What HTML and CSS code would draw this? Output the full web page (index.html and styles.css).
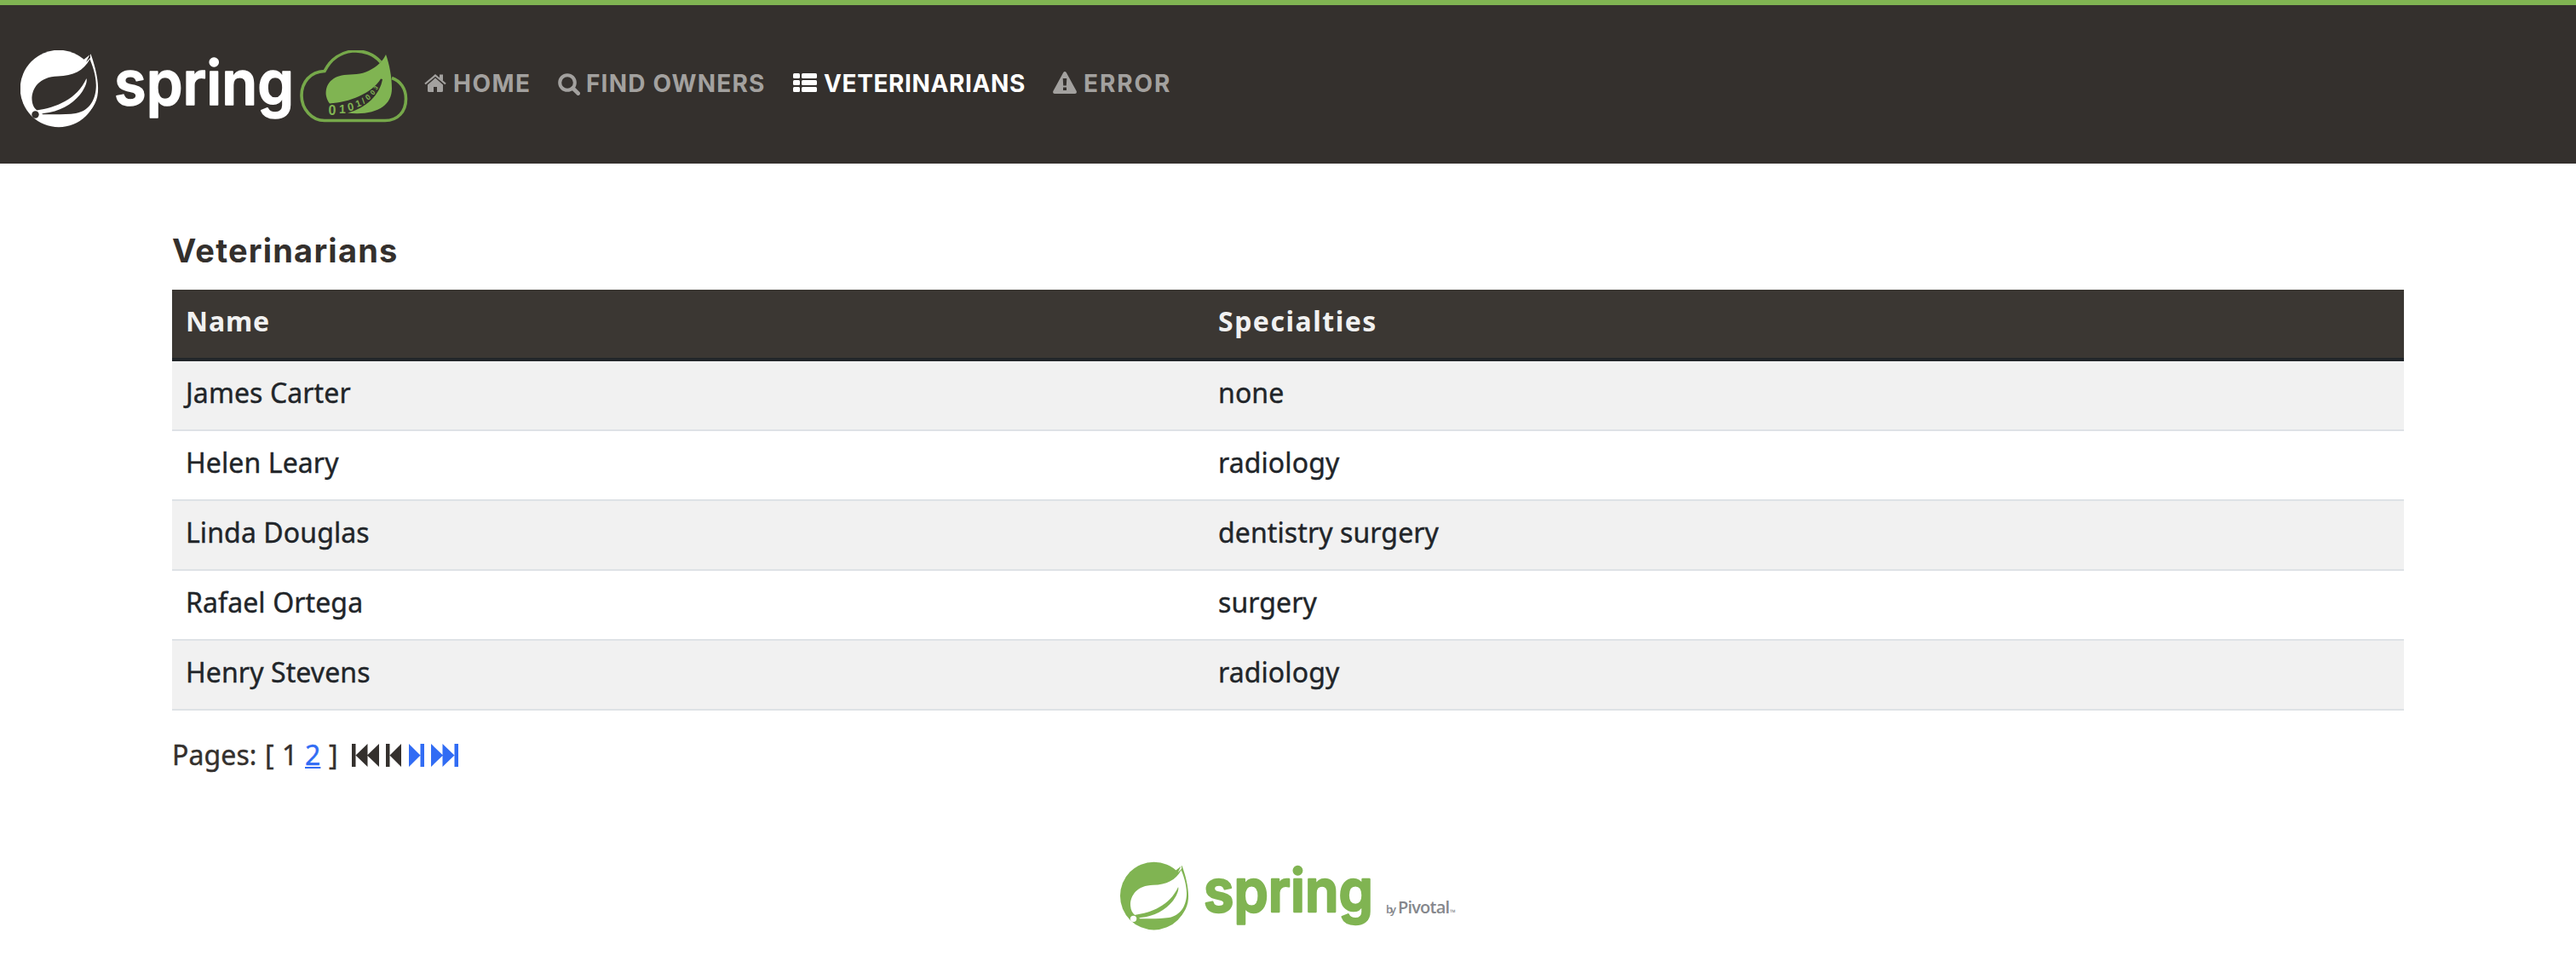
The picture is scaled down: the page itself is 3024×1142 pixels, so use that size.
FILE: index.html
```html
<!DOCTYPE html>
<html lang="en">
<head>
<meta charset="utf-8">
<title>PetClinic :: Veterinarians</title>
<link rel="stylesheet" href="styles.css">
</head>
<body>
<header class="navbar">
  <a class="brand" aria-label="Spring">
    <svg width="498" height="186" viewBox="0 6 498 186">
      <defs><clipPath id="logo-clip"><rect x="24" y="59" width="456" height="92"/></clipPath></defs>
      <g clip-path="url(#logo-clip)">
        <circle cx="69" cy="104" r="45.3" fill="#fff"/>
        <path fill="#fff" d="M106.5 63.5C112 78 116 96 115 108C114 122 106 132 96 138L60 100Z"/>
        <path fill="#34302d" d="M105.5 69.500C98 83 86 89 68 89.500C46 90 37 104 37.500 117C38 123 40 127 44 130L50 134.300C62 134.300 78 134.800 89 133C106 130 113 115 112.800 100C112.500 88 109 78 105.500 69.500ZM101 73L106 63L106 68Z"/>
        <path fill="#fff" d="M43 129.500C66 126 90 117 101.500 92C103 97 98 106 94 111C84 123 70 131 51 133L46 135Z"/>
        <circle cx="41.500" cy="134.500" r="4.200" fill="#34302d"/>
        <path class="cloud" d="M447 73C431 54 396 54 381 83.500C364 84 354 97 354 112C354 128 366 141.500 381 141.500H452C467 141.500 476.500 131 476.500 116C476.500 104 470 95 460 91.500"/>
        <path fill="#80b452" d="M453 64C450 71 443 78 433 83C424 88 413 87 404 88C388 90 381 101 383 113C384 117 385 119 387 121.500C410 120 436 110 447 92.500L449 93C446 111 430 127 408 132.500C440 136 460 125 460 104C460 90 457 75 453 64Z"/>
        <g class="bits">
          <text x="385.500" y="135" font-size="16">0</text>
          <text x="398" y="133" font-size="14">1</text>
          <text transform="translate(409 130.500) rotate(-12)" font-size="13">0</text>
          <text transform="translate(419 126) rotate(-20)" font-size="11">1</text>
          <text transform="translate(427 122) rotate(-30)" font-size="10">/</text>
          <text transform="translate(432 118) rotate(-40)" font-size="9">0</text>
          <text transform="translate(438 112) rotate(-48)" font-size="8">0</text>
          <text transform="translate(442 106) rotate(-55)" font-size="7">3</text>
        </g>
      </g>
      <text class="wordmark" x="134" y="123" font-size="72" textLength="211" lengthAdjust="spacingAndGlyphs" fill="#fff" stroke="#fff" stroke-width="1.500">spring</text>
    </svg>
  </a>
  <nav class="menu">
    <a class="item home"><svg width="26" height="22" viewBox="0 0 26 22"><path d="M13 4.600L22 12.500V19.500Q22 21 20.500 21H15V15H11V21H5.500Q4 21 4 19.500V12.500Z"/><path d="M1 11.500L13 1.500L25 11.500" fill="none" stroke="currentColor" stroke-width="2.200"/><path d="M18 0.500H22V8L18 5Z"/></svg><span>HOME</span></a>
    <a class="item find"><svg width="26" height="26" viewBox="0 0 26 26"><circle cx="11" cy="11" r="8.800" fill="none" stroke="currentColor" stroke-width="4"/><path d="M17.500 17.500L23.700 23.700" stroke="currentColor" stroke-width="4.600" stroke-linecap="round"/></svg><span>FIND OWNERS</span></a>
    <a class="item vets"><svg width="28" height="22" viewBox="0 0 28 22"><rect width="8" height="6" rx="1.500"/><rect x="10" width="18" height="6" rx="1.500"/><rect y="8" width="8" height="6" rx="1.500"/><rect x="10" y="8" width="18" height="6" rx="1.500"/><rect y="16" width="8" height="6" rx="1.500"/><rect x="10" y="16" width="18" height="6" rx="1.500"/></svg><span>VETERINARIANS</span></a>
    <a class="item error"><svg width="28" height="26" viewBox="0 0 28 26"><path fill-rule="evenodd" d="M12.300 1Q14 -1 15.700 1L27.700 23Q28.500 26 26 26H2Q-0.500 26 0.300 23ZM11.700 8L12.200 16.500H15.800L16.300 8ZM12 18.500V22H16V18.500Z"/></svg><span>ERROR</span></a>
  </nav>
</header>
<main class="content">
  <h2>Veterinarians</h2>
  <table class="vet-table">
    <thead><tr><th class="name">Name</th><th class="spec">Specialties</th></tr></thead>
    <tbody>
      <tr><td>James Carter</td><td>none</td></tr>
      <tr><td>Helen Leary</td><td>radiology</td></tr>
      <tr><td>Linda Douglas</td><td>dentistry surgery</td></tr>
      <tr><td>Rafael Ortega</td><td>surgery</td></tr>
      <tr><td>Henry Stevens</td><td>radiology</td></tr>
    </tbody>
  </table>
  <div class="pager">
    <span class="label">Pages:</span><span class="open">[</span><span class="current">1</span><a class="page">2</a><span class="close">]</span>
    <svg class="first" width="32" height="27" viewBox="0 0 32 27"><path d="M0 0H4.500V27H0ZM4.500 13.500L18.500 0V27ZM18 13.500L32 0V27Z"/></svg>
    <svg class="prev" width="18" height="27" viewBox="0 0 18 27"><path d="M0 0H4.500V27H0ZM4.500 13.500L18 0V27Z"/></svg>
    <svg class="next" width="18" height="27" viewBox="0 0 18 27"><path d="M18 0H13.500V27H18ZM13.500 13.500L0 0V27Z"/></svg>
    <svg class="last" width="32" height="27" viewBox="0 0 32 27"><path d="M32 0H27.500V27H32ZM27.500 13.500L13.500 0V27ZM14 13.500L0 0V27Z"/></svg>
  </div>
</main>
<footer class="footer">
  <svg width="444" height="100" viewBox="1290 1000 444 100">
    <g transform="translate(1294.200 960) scale(.876 .880)">
      <circle cx="69" cy="104" r="45.300" fill="#80b452"/>
      <path fill="#80b452" d="M106.500 63.500C112 78 116 96 115 108C114 122 106 132 96 138L60 100Z"/>
      <path fill="#fff" d="M105.500 69.500C98 83 86 89 68 89.500C46 90 37 104 37.500 117C38 123 40 127 44 130L50 134.300C62 134.300 78 134.800 89 133C106 130 113 115 112.800 100C112.500 88 109 78 105.500 69.500ZM101 73L106 63L106 68Z"/>
      <path fill="#80b452" d="M43 129.500C66 126 90 117 101.500 92C103 97 98 106 94 111C84 123 70 131 51 133L46 135Z"/>
      <circle cx="41.500" cy="134.500" r="4.200" fill="#fff"/>
    </g>
    <text class="wordmark" x="1413" y="1070" font-size="69" textLength="199" lengthAdjust="spacingAndGlyphs" fill="#80b452" stroke="#80b452" stroke-width="2.500">spring</text>
    <g class="byline">
      <text x="1627" y="1071.500" font-size="13" textLength="12">by</text>
      <text x="1641" y="1071.500" font-size="20" textLength="61">Pivotal</text>
      <text x="1702" y="1073.500" font-size="9">™</text>
    </g>
  </svg>
</footer>
</body>
</html>
```
FILE: styles.css
```css
* {
  box-sizing: border-box;
}

body {
  margin: 0;
  background: #fff;
  color: #34302d;
  font: 400 32px/48px "Noto Sans", sans-serif;
  letter-spacing: 0.1px;
}

svg {
  display: block;
  fill: currentColor;
  flex: none;
  letter-spacing: 0;
}

.navbar {
  display: flex;
  height: 192px;
  border-top: 6px solid #80b452;
  background: #34302d;
}

.brand {
  display: block;
  width: 498px;
}

.wordmark {
  font-family: Inter, sans-serif;
  font-weight: 600;
  stroke-linejoin: round;
}

.cloud {
  fill: none;
  stroke: #76a84a;
  stroke-width: 3.6;
}

.bits {
  fill: #80b452;
  font-family: "Liberation Sans", sans-serif;
  font-weight: 700;
}

.menu {
  display: grid;
  grid-template-columns: 157px 276px 305px auto;
  align-items: start;
  padding-top: 75px;
  color: #a3a19f;
  font: 700 28px/34px Inter, sans-serif;
}

.item {
  display: flex;
  align-items: flex-start;
  white-space: nowrap;
}

.home svg {
  margin: 6px 8px 0 0;
}

.home {
  letter-spacing: 1.47px;
}

.find svg {
  margin: 5px 7px 0 0;
}

.find {
  letter-spacing: 1.18px;
}

.vets {
  color: #fff;
  letter-spacing: 0.62px;
}

.vets svg {
  margin: 5px 8px 0 0;
}

.error {
  letter-spacing: 1.91px;
}

.error svg {
  margin: 3px 8px 0 0;
}

.content {
  width: 2620px;
  margin: 79px auto 0;
}

h2 {
  margin: 0 0 23px;
  font: 700 38px/46px Inter, sans-serif;
  letter-spacing: 1.22px;
}

.vet-table {
  width: 100%;
  table-layout: fixed;
  border-spacing: 0;
  text-align: left;
  color: #212529;
}

td,
.pager {
  -webkit-text-stroke: 0.4px currentColor;
}

th,
td {
  height: 82px;
  padding: 12px 16px 18px;
  border-bottom: 2px solid #dee2e6;
}

th {
  height: 84px;
  border-bottom: 4px solid #212529;
  background: #3b3733;
  color: #f1f1f1;
  font-weight: 700;
}

.name {
  width: 1212px;
  letter-spacing: 0.87px;
}

.spec {
  letter-spacing: 1.5px;
}

tbody tr:nth-child(odd) td {
  background: #f1f1f1;
}

.pager {
  display: flex;
  align-items: flex-start;
  margin-top: 28px;
}

.pager svg {
  margin-top: 11px;
}

.label {
  width: 109px;
}

.open {
  width: 20px;
}

.current {
  width: 27px;
}

.page {
  width: 20px;
  text-decoration: underline;
  text-decoration-thickness: 2px;
  text-underline-offset: 2px;
}

.page,
.next,
.last {
  color: #316cf4;
}

.close {
  width: 35px;
  padding-left: 8px;
}

.prev {
  margin-left: 8px;
}

.next {
  margin-left: 9px;
}

.last {
  margin-left: 8px;
}

.footer {
  display: flex;
  justify-content: center;
  margin-top: 90px;
}

.byline {
  fill: #85878c;
  font-family: "Open Sans", sans-serif;
  font-weight: 600;
}
```
